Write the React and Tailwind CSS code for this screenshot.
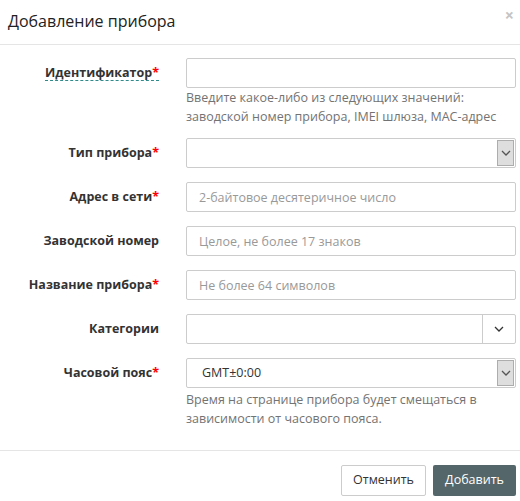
import React from 'react';

const Star = () => <span className="text-[#ff0000]">*</span>;

const Chevron = ({ className = '' }) => (
  <svg width="10" height="6" viewBox="0 0 10 6" className={className}>
    <path d="M1 1l4 4 4-4" fill="none" stroke="currentColor" strokeWidth="1.3" />
  </svg>
);

const Row = ({ label, required, abbr, children, help, helpClass = '' }) => (
  <div className="flex items-start">
    <div className="w-[159px] h-[30px] shrink-0 flex items-center justify-end font-bold text-[#333]">
      {abbr ? (
        <span className="leading-[15px] border-b border-dashed border-[#2f8b8b]">
          {label}
          {required && <Star />}
        </span>
      ) : (
        <span>
          {label}
          {required && <Star />}
        </span>
      )}
    </div>
    <div className="ml-[27px] w-[330px]">
      {children}
      {help && <div className={`text-[#737373] leading-[19px] ${helpClass}`}>{help}</div>}
    </div>
  </div>
);

const Input = ({ placeholder }) => (
  <input
    placeholder={placeholder}
    className="block w-full h-[30px] border border-[#ccc] rounded-[2px] px-[12px] text-[12.5px] text-[#555] placeholder:text-[#999] outline-none"
  />
);

const Select = ({ value }) => (
  <div className="relative h-[30px] border border-[#ccc] rounded-[2px] flex items-center">
    <span className="pl-[15px] text-[#333]">{value}</span>
    <div className="absolute right-[1px] top-[1px] bottom-[1px] w-[17px] bg-[#dedede] border border-[#adadad] flex items-center justify-center text-[#555]">
      <Chevron />
    </div>
  </div>
);

export default function App() {
  return (
    <div className="w-[520px] h-[501px] bg-white text-[12.5px] text-[#333]" style={{ fontFamily: '"Open Sans", "Liberation Sans", sans-serif' }}>
      <div className="h-[45px] border-b border-[#e5e5e5] flex items-center justify-between pl-[8px] pr-[6px]">
        <h4 className="text-[16px] text-[#222] leading-none -mt-[2px]">Добавление прибора</h4>
        <span className="text-[#c4c4c4] text-[16px] font-bold -mt-[14px]">×</span>
      </div>

      <div className="pt-[13px] h-[406px] border-b border-[#e5e5e5] flex flex-col">
        <div className="mb-[12px]">
          <Row
            label="Идентификатор"
            required
            abbr
            help={<>Введите какое-либо из следующих значений:<br />заводской номер прибора, IMEI шлюза, MAC-адрес</>}
          >
            <Input />
          </Row>
        </div>
        <div className="mb-[14px]">
          <Row label="Тип прибора" required>
            <Select value="" />
          </Row>
        </div>
        <div className="mb-[14px]">
          <Row label="Адрес в сети" required>
            <Input placeholder="2-байтовое десятеричное число" />
          </Row>
        </div>
        <div className="mb-[14px]">
          <Row label="Заводской номер">
            <Input placeholder="Целое, не более 17 знаков" />
          </Row>
        </div>
        <div className="mb-[14px]">
          <Row label="Название прибора" required>
            <Input placeholder="Не более 64 символов" />
          </Row>
        </div>
        <div className="mb-[14px]">
          <Row label="Категории">
            <div className="h-[30px] border border-[#ccc] rounded-[2px] flex">
              <div className="flex-1" />
              <div className="w-[33px] border-l border-[#ccc] flex items-center justify-center text-[#333]">
                <Chevron />
              </div>
            </div>
          </Row>
        </div>
        <div>
          <Row
            label="Часовой пояс"
            required
            help={<>Время на странице прибора будет смещаться в<br />зависимости от часового пояса.</>}
            helpClass="mt-[2px]"
          >
            <Select value="GMT±0:00" />
          </Row>
        </div>
      </div>

      <div className="flex justify-end gap-[7px] pt-[14px] pr-[4px]">
        <button className="h-[31px] w-[85px] border border-[#ccc] rounded-[2px] bg-white text-[#333] text-[12.5px]">Отменить</button>
        <button className="h-[31px] w-[83px] rounded-[2px] bg-[#546669] text-white text-[12.5px]">Добавить</button>
      </div>
    </div>
  );
}
